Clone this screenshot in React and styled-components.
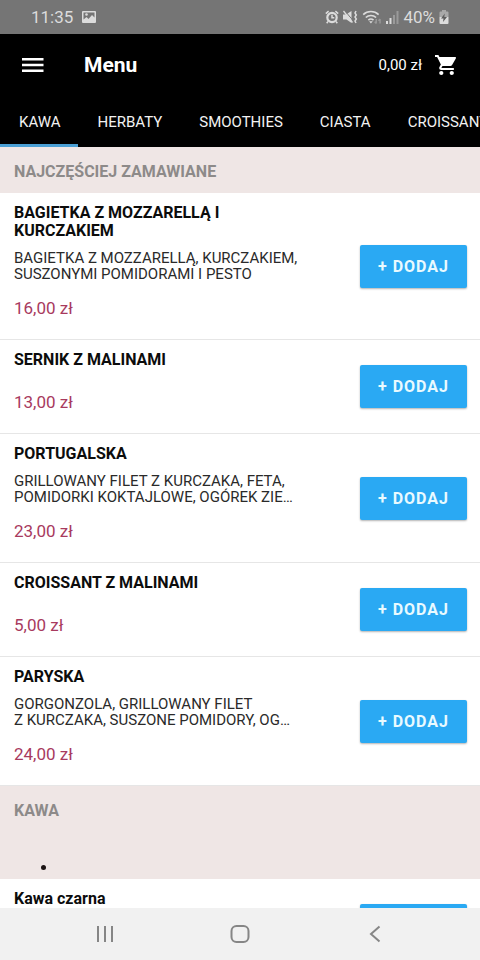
import React, { useState } from "react"
import styled, { createGlobalStyle } from "styled-components"

const GlobalStyle = createGlobalStyle`
* {
    box-sizing: border-box;
}
body {
    margin: 0;
    background: #fff;
    font-family: Roboto, "Liberation Sans", sans-serif;
}
h1, h2, h3, p {
    margin: 0;
}
button {
    border: 0;
    padding: 0;
    background: none;
    font-family: inherit;
    cursor: pointer;
}
`

const Screen = styled.div`
display: flex;
flex-flow: column;
height: 100vh;
overflow: hidden;
`

const StatusBar = styled.div`
display: flex;
flex: none;
align-items: center;
justify-content: space-between;
height: 34px;
padding: 0 31px;
background: #757575;
color: #dcdcdc;
font-size: 17px;
`

const StatusGroup = styled.div`
display: flex;
align-items: center;
gap: ${(p) => p.$gap}px;
`

const Header = styled.header`
display: flex;
flex: none;
align-items: center;
height: 61px;
padding: 0 23px 0 20px;
background: #000;
color: #fff;
`

const IconButton = styled.button`
display: flex;
align-items: center;
justify-content: center;
color: #fff;
`

const PageTitle = styled.h1`
flex: 1;
padding-left: 39px;
font-size: 21px;
font-weight: 700;
`

const CartButton = styled(IconButton)`
gap: 13px;
font-size: 15px;
`

const Tabs = styled.nav`
display: flex;
flex: none;
height: 52px;
overflow: hidden;
background: #000;
`

const Tab = styled.button`
flex: none;
padding: 4px 18px 0 19px;
border-bottom: 3px solid ${(p) => (p.$active ? "#4a9fd4" : "#000")};
color: #f2f2f2;
font-size: 15px;
white-space: nowrap;
`

const List = styled.main`
flex: 1;
min-height: 0;
overflow: hidden;
`

const SectionHeader = styled.div`
display: flex;
flex-flow: column;
justify-content: space-between;
padding: 16px 14px 12px;
min-height: ${(p) => (p.$tall ? 93 : 46)}px;
background: #efe6e5;
`

const SectionTitle = styled.h2`
color: #8d8a89;
font-size: 16px;
font-weight: 700;
line-height: 18px;
`

const Dot = styled.span`
width: 5px;
height: 5px;
margin: 0 0 -3px 27px;
border-radius: 50%;
background: #1c1414;
`

const Row = styled.article`
display: flex;
align-items: center;
justify-content: space-between;
padding: 11px 13px 21px 14px;
border-bottom: 1px solid #e6e6e6;
`

const Info = styled.div`
flex: 1;
max-width: 290px;
`

const Name = styled.h3`
color: #0c0c0c;
font-size: 16px;
font-weight: 700;
line-height: 18px;
`

const Description = styled.p`
margin-top: 10px;
color: #2a2a2a;
font-size: 15px;
line-height: 16px;
white-space: pre-line;
`

const Price = styled.p`
margin-top: ${(p) => (p.$afterText ? 16 : 23)}px;
color: #a83a5e;
font-size: 17px;
line-height: 20px;
`

const AddButton = styled.button`
flex: none;
width: 107px;
height: 43px;
margin-top: 10px;
border-radius: 2px;
background: #2aa9f3;
box-shadow: 0 1px 2px rgba(0, 0, 0, 0.3);
color: #e9faff;
font-size: 16px;
font-weight: 700;
letter-spacing: 1px;
`

const NavBar = styled.nav`
display: flex;
flex: none;
align-items: center;
height: 52px;
padding: 0 38px;
background: #f1f1f1;
`

const NavButton = styled(IconButton)`
flex: 1;
`

const tabs = ["KAWA", "HERBATY", "SMOOTHIES", "CIASTA", "CROISSANTY"]

const popular = [
    {
        name: "BAGIETKA Z MOZZARELLĄ I KURCZAKIEM",
        description: "BAGIETKA Z MOZZARELLĄ, KURCZAKIEM,\nSUSZONYMI POMIDORAMI I PESTO",
        price: "16,00 zł",
    },
    { name: "SERNIK Z MALINAMI", price: "13,00 zł" },
    {
        name: "PORTUGALSKA",
        description: "GRILLOWANY FILET Z KURCZAKA, FETA,\nPOMIDORKI KOKTAJLOWE, OGÓREK ZIE…",
        price: "23,00 zł",
    },
    { name: "CROISSANT Z MALINAMI", price: "5,00 zł" },
    {
        name: "PARYSKA",
        description: "GORGONZOLA, GRILLOWANY FILET\nZ KURCZAKA, SUSZONE POMIDORY, OG…",
        price: "24,00 zł",
    },
]

const coffees = [{ name: "Kawa czarna", price: "7,00 zł" }]

const PictureIcon = () => (
    <svg width="14" height="12" viewBox="0 0 14 12">
        <path fill="#dcdcdc" fillRule="evenodd" d="M1 0h12a1 1 0 0 1 1 1v10a1 1 0 0 1-1 1H1a1 1 0 0 1-1-1V1a1 1 0 0 1 1-1zM1.5 1.5v7L4.5 6l2 2 3.500-4 2.500 2.500v-5z" />
        <circle cx="4.500" cy="3.500" r="1.300" fill="#dcdcdc" />
    </svg>
)

const AlarmIcon = () => (
    <svg width="14" height="14" viewBox="0 0 14 14" fill="none" stroke="#dcdcdc">
        <circle cx="7" cy="7.500" r="4.700" strokeWidth="2.200" />
        <path strokeWidth="1.500" d="M7 4.800v3h2.300M.8 3.600l2.800-2.500M13.200 3.600l-2.800-2.500M3 11.500l-1.300 1.700M11 11.500l1.300 1.700" />
    </svg>
)

const MuteIcon = () => (
    <svg width="15" height="14" viewBox="0 0 15 14">
        <path fill="#dcdcdc" d="M0 4.500h3L8.500 1v12L3.500 9.500H0z" />
        <path stroke="#757575" strokeWidth="1" d="M2 1l8 9.500" />
        <path stroke="#dcdcdc" strokeWidth="1.300" d="M.5 1l9 11.500" />
        <path fill="none" stroke="#dcdcdc" strokeWidth="1.500" d="M13 1l-1 2 1.300 2L12 7l1.300 2L12 11l1 2" />
    </svg>
)

const WifiIcon = () => (
    <svg width="20" height="15" viewBox="0 0 18 14" fill="none" stroke="#dcdcdc" strokeWidth="1.500">
        <path d="M.8 4.300a10.500 10.500 0 0 1 14.400 0M3.200 7a7 7 0 0 1 9.600 0M5.600 9.500a3.600 3.600 0 0 1 4.800 0" />
        <path fill="#dcdcdc" stroke="none" d="M6.300 10.500h3.400L8 12.500z" />
        <path stroke="#999" strokeWidth="1.300" d="M13 8.500v4M11.500 11l1.500 1.500M16.500 12.500v-4M15 10l1.500-1.500" />
    </svg>
)

const SignalIcon = () => (
    <svg width="13" height="13" viewBox="0 0 13 13">
        <path fill="#dcdcdc" d="M0 10h2v3H0zM3.500 7h2v6h-2z" />
        <path fill="#9a9a9a" d="M7 4h2v9H7zM10.500 0h2v13h-2z" />
    </svg>
)

const BatteryIcon = () => (
    <svg width="10" height="14" viewBox="0 0 10 14">
        <path fill="#a9a9a9" d="M3 0h4v1.500h1.500a1 1 0 0 1 1 1V7h-9V2.500a1 1 0 0 1 1-1H3z" />
        <path fill="#dcdcdc" d="M.5 7h9v6a1 1 0 0 1-1 1h-7a1 1 0 0 1-1-1z" />
        <path fill="#5e5e5e" d="M5.800 3.500L2 8.500h2.500L4 12l4-5H5.300z" />
    </svg>
)

const MenuIcon = () => (
    <svg width="25" height="16" viewBox="0 0 25 16" fill="#fff">
        <path d="M2 1h21.500v2.500H2zM2 6.800h21.500v2.400H2zM2 12.500h21.500V15H2z" />
    </svg>
)

// basket is filled solid, rim and handle are one outline
const CartIcon = () => (
    <svg width="22" height="20" viewBox="1 2 21 20" fill="#fff" preserveAspectRatio="none">
        <path d="M7 18c-1.100 0-1.990.9-1.990 2S5.900 22 7 22s2-.9 2-2-.9-2-2-2zM1 2v2h2l3.600 7.590-1.350 2.450c-.16.280-.25.610-.25.960 0 1.100.9 2 2 2h12v-2H7.420c-.14 0-.25-.11-.25-.25l.030-.12.900-1.630h7.450c.750 0 1.410-.41 1.750-1.030l3.580-6.490A1 1 0 0 0 20 4H5.210l-.94-2H1zm16 16c-1.100 0-1.990.9-1.990 2s.89 2 1.990 2 2-.9 2-2-.9-2-2-2z" />
    </svg>
)

const RecentsIcon = () => (
    <svg width="18" height="18" viewBox="0 0 18 18" stroke="#868686" strokeWidth="2">
        <path d="M2 1v16M9 1v16M16 1v16" />
    </svg>
)

const HomeIcon = () => (
    <svg width="20" height="18" viewBox="0 0 20 18" fill="none" stroke="#868686" strokeWidth="2">
        <rect x="1.500" y="1" width="17" height="16" rx="5" />
    </svg>
)

const BackIcon = () => (
    <svg width="12" height="18" viewBox="0 0 12 18" fill="none" stroke="#868686" strokeWidth="2">
        <path d="M10.500 1.500L2 9l8.500 7.500" />
    </svg>
)

const MenuItem = ({ item, onAdd }) => (
    <Row>
        <Info>
            <Name>{item.name}</Name>
            {item.description && <Description>{item.description}</Description>}
            <Price $afterText={!!item.description}>{item.price}</Price>
        </Info>
        <AddButton type="button" onClick={onAdd}>+ DODAJ</AddButton>
    </Row>
)

const toNumber = (price) => parseFloat(price.replace(",", "."))

export default function App() {
    const [active, setActive] = useState("KAWA")
    const [total, setTotal] = useState(0)

    const add = (item) => setTotal(total + toNumber(item.price))

    return (
        <Screen>
            <GlobalStyle />
            <StatusBar>
                <StatusGroup $gap={9}>
                    <span>11:35</span>
                    <PictureIcon />
                </StatusGroup>
                <StatusGroup $gap={4}>
                    <AlarmIcon />
                    <MuteIcon />
                    <WifiIcon />
                    <SignalIcon />
                    <span>40%</span>
                    <BatteryIcon />
                </StatusGroup>
            </StatusBar>
            <Header>
                <IconButton type="button" aria-label="Menu">
                    <MenuIcon />
                </IconButton>
                <PageTitle>Menu</PageTitle>
                <CartButton type="button">
                    <span>{total.toFixed(2).replace(".", ",")} zł</span>
                    <CartIcon />
                </CartButton>
            </Header>
            <Tabs>
                {tabs.map((t) => (
                    <Tab key={t} type="button" $active={t === active} onClick={() => setActive(t)}>{t}</Tab>
                ))}
            </Tabs>
            <List>
                <SectionHeader>
                    <SectionTitle>NAJCZĘŚCIEJ ZAMAWIANE</SectionTitle>
                </SectionHeader>
                {popular.map((item) => (
                    <MenuItem key={item.name} item={item} onAdd={() => add(item)} />
                ))}
                <SectionHeader $tall>
                    <SectionTitle>KAWA</SectionTitle>
                    <Dot />
                </SectionHeader>
                {coffees.map((item) => (
                    <MenuItem key={item.name} item={item} onAdd={() => add(item)} />
                ))}
            </List>
            <NavBar>
                <NavButton type="button" aria-label="Ostatnie">
                    <RecentsIcon />
                </NavButton>
                <NavButton type="button" aria-label="Ekran główny">
                    <HomeIcon />
                </NavButton>
                <NavButton type="button" aria-label="Wstecz">
                    <BackIcon />
                </NavButton>
            </NavBar>
        </Screen>
    )
}
